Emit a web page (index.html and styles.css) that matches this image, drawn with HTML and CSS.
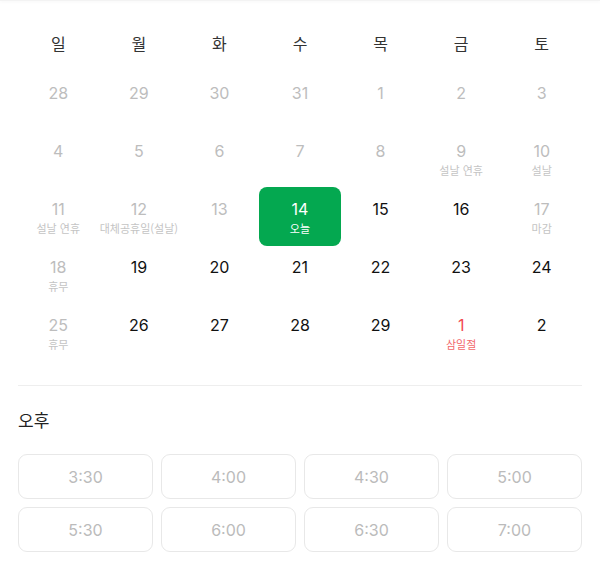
FILE: index.html
```html
<!DOCTYPE html>
<html lang="ko">
<head>
    <meta charset="UTF-8">
    <meta name="viewport" content="width=device-width, initial-scale=1.0">
    <title>예약 날짜 선택</title>
    <link rel="stylesheet" href="styles.css">
</head>
<body>
    <div class="topbar"></div>
    <main class="picker">
        <div class="weekdays">
            <div>일</div><div>월</div><div>화</div><div>수</div><div>목</div><div>금</div><div>토</div>
        </div>

        <div class="days">
            <div class="day off"><span class="num">28</span></div>
            <div class="day off"><span class="num">29</span></div>
            <div class="day off"><span class="num">30</span></div>
            <div class="day off"><span class="num">31</span></div>
            <div class="day off"><span class="num">1</span></div>
            <div class="day off"><span class="num">2</span></div>
            <div class="day off"><span class="num">3</span></div>

            <div class="day off"><span class="num">4</span></div>
            <div class="day off"><span class="num">5</span></div>
            <div class="day off"><span class="num">6</span></div>
            <div class="day off"><span class="num">7</span></div>
            <div class="day off"><span class="num">8</span></div>
            <div class="day off"><span class="num">9</span><span class="note">설날 연휴</span></div>
            <div class="day off"><span class="num">10</span><span class="note">설날</span></div>

            <div class="day off"><span class="num">11</span><span class="note">설날 연휴</span></div>
            <div class="day off"><span class="num">12</span><span class="note">대체공휴일(설날)</span></div>
            <div class="day off"><span class="num">13</span></div>
            <div class="day today"><span class="num">14</span><span class="note">오늘</span></div>
            <div class="day"><span class="num">15</span></div>
            <div class="day"><span class="num">16</span></div>
            <div class="day off"><span class="num">17</span><span class="note">마감</span></div>

            <div class="day off"><span class="num">18</span><span class="note">휴무</span></div>
            <div class="day"><span class="num">19</span></div>
            <div class="day"><span class="num">20</span></div>
            <div class="day"><span class="num">21</span></div>
            <div class="day"><span class="num">22</span></div>
            <div class="day"><span class="num">23</span></div>
            <div class="day"><span class="num">24</span></div>

            <div class="day off"><span class="num">25</span><span class="note">휴무</span></div>
            <div class="day"><span class="num">26</span></div>
            <div class="day"><span class="num">27</span></div>
            <div class="day"><span class="num">28</span></div>
            <div class="day"><span class="num">29</span></div>
            <div class="day holiday"><span class="num">1</span><span class="note">삼일절</span></div>
            <div class="day"><span class="num">2</span></div>
        </div>

        <hr class="divider">

        <h2 class="period">오후</h2>
        <div class="slots">
            <button class="slot" disabled>3:30</button>
            <button class="slot" disabled>4:00</button>
            <button class="slot" disabled>4:30</button>
            <button class="slot" disabled>5:00</button>
            <button class="slot" disabled>5:30</button>
            <button class="slot" disabled>6:00</button>
            <button class="slot" disabled>6:30</button>
            <button class="slot" disabled>7:00</button>
        </div>
    </main>
</body>
</html>
```

FILE: styles.css
```css
body {
    margin: 0;
    background-color: #fff;
    color: #111;
    font-family: Inter, "Noto Sans CJK KR", sans-serif;
}

.topbar {
    height: 1px;
    background-color: #f3f3f3;
    box-shadow: 0 1px 3px rgba(0, 0, 0, 0.06);
}

.picker {
    padding: 31px 18px 0;
}

.weekdays {
    display: grid;
    grid-template-columns: repeat(7, 1fr);
    margin-bottom: 17px;
    font-size: 16px;
    line-height: 22px;
    color: #333;
    text-align: center;
    font-family: "Noto Sans CJK KR", sans-serif;
}

.days {
    display: grid;
    grid-template-columns: repeat(7, 1fr);
    grid-auto-rows: 58px;
}

.day {
    display: flex;
    flex-direction: column;
    align-items: center;
    padding-top: 12px;
    box-sizing: border-box;
    border-radius: 8px;
}

.num {
    font-size: 16px;
    line-height: 20px;
}

.note {
    margin-top: 2px;
    font-size: 11px;
    line-height: 14px;
    white-space: nowrap;
    font-family: "Noto Sans CJK KR", sans-serif;
}

.off {
    color: #bdbdbd;
}

.off .note {
    color: #c4c4c4;
}

.holiday {
    color: #f24a50;
}

.holiday .note {
    color: #f2676b;
}

.today {
    background-color: #04a850;
    color: #fff;
    margin: 0 -0.5px 0;
    height: 59px;
}

.divider {
    margin: 24px 0 0;
    border: 0;
    border-top: 1px solid #eeeeee;
}

.period {
    margin: 22px 0 22px;
    font-size: 17px;
    line-height: 24px;
    font-weight: normal;
    color: #222;
    font-family: "Noto Sans CJK KR", sans-serif;
}

.slots {
    display: grid;
    grid-template-columns: repeat(4, 1fr);
    gap: 8px;
}

.slot {
    height: 45px;
    border: 1.5px solid #e8e8e8;
    border-radius: 9px;
    background-color: #fff;
    color: #bbbbbb;
    font-family: Inter, sans-serif;
    font-size: 16px;
}
```
